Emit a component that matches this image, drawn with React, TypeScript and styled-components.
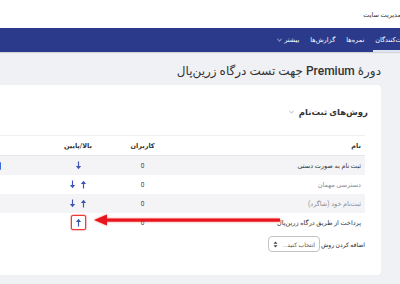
import React from "react";
import styled, { createGlobalStyle } from "styled-components";

const GlobalStyle = createGlobalStyle`
  html, body {
    margin: 0;
    padding: 0;
    background: #f0f1f5;
    overflow: hidden;
  }
  body {
    font-family: Roboto, "DejaVu Sans", sans-serif;
    color: #333;
  }
`;

type Method = { name: string; users: number; up: boolean; down: boolean; muted?: boolean; mark?: boolean; edit?: boolean };

const methods: Method[] = [
  { name: "ثبت نام به صورت دستی", users: 0, up: false, down: true, edit: true },
  { name: "دسترسی مهمان", users: 0, up: true, down: true, muted: true },
  { name: "ثبت‌نام خود (شاگرد)", users: 0, up: true, down: true, muted: true },
  { name: "پرداخت از طریق درگاه زرین‌پال", users: 0, up: true, down: false, mark: true },
];

const Arrow: React.FC<{ dir: "up" | "down" }> = ({ dir }) => (
  <svg width="7" height="9" viewBox="0 0 7 9" style={{ transform: dir === "down" ? "rotate(180deg)" : undefined }}>
    <path d="M3.5 8.5 V2.5" stroke="#3a55b2" strokeWidth="1.15" />
    <path d="M0.9 4.1 L3.5 0.8 L6.1 4.1 Z" fill="#3a55b2" />
  </svg>
);

const App: React.FC = () => {
  return (
    <Page dir="rtl">
      <GlobalStyle />
      <TopBar>
        <SiteLink>مدیریت سایت</SiteLink>
      </TopBar>
      <NavBar>
        <NavList>
          <NavItem $active>شرکت‌کنندگان</NavItem>
          <NavItem>نمره‌ها</NavItem>
          <NavItem>گزارش‌ها</NavItem>
          <NavItem>
            بیشتر
            <svg width="5" height="4" viewBox="0 0 6 4">
              <path d="M0.5 0.8 L3 3.2 L5.5 0.8" stroke="#fff" strokeWidth="0.9" fill="none" />
            </svg>
          </NavItem>
        </NavList>
      </NavBar>
      <Content>
        <Title>دورهٔ Premium جهت تست درگاه زرین‌پال</Title>
        <Card>
          <SectionHead>
            روش‌های ثبت‌نام
            <svg width="5" height="4" viewBox="0 0 6 4">
              <path d="M0.5 0.8 L3 3.2 L5.5 0.8" stroke="#999" strokeWidth="0.9" fill="none" />
            </svg>
          </SectionHead>
          <Table>
            <thead>
              <tr>
                <Th $w={172}>نام</Th>
                <Th $w={77} $center>کاربران</Th>
                <Th $w={36} $center>بالا/پایین</Th>
                <Th />
              </tr>
            </thead>
            <tbody>
              {methods.map((m, i) => (
                <Row key={i} $striped={i % 2 === 0}>
                  <NameCell $muted={m.muted}>{m.name}</NameCell>
                  <Td $center>{m.users}</Td>
                  <Td $center>
                    <Moves>
                      {m.up && (m.mark ? <MarkedBtn><Arrow dir="up" /></MarkedBtn> : <MoveBtn><Arrow dir="up" /></MoveBtn>)}
                      {m.down && <MoveBtn><Arrow dir="down" /></MoveBtn>}
                    </Moves>
                  </Td>
                  <ActionCell>
                    {m.edit && (
                      <svg width="10" height="10" viewBox="0 0 10 10">
                        <rect x="0" y="1" width="9" height="8" rx="1" fill="#3a6fd8" />
                      </svg>
                    )}
                  </ActionCell>
                </Row>
              ))}
            </tbody>
          </Table>
          <AddRow>
            <AddLabel>اضافه کردن روش</AddLabel>
            <Select>
              انتخاب کنید...
              <svg width="5" height="7" viewBox="0 0 5 7">
                <path d="M0.5 2.8 L2.5 0.6 L4.5 2.8 Z M0.5 4.2 L2.5 6.4 L4.5 4.2 Z" fill="#444" />
              </svg>
            </Select>
          </AddRow>
        </Card>
      </Content>
      <Pointer width="186" height="12" viewBox="0 0 186 12">
        <rect x="10" y="4.5" width="176" height="3.2" fill="#e8161c" />
        <path d="M0 6 L13 0.5 L13 11.5 Z" fill="#e8161c" />
      </Pointer>
    </Page>
  );
};

const Page = styled.div`
  position: relative;
  width: 400px;
  height: 284px;
  direction: rtl;
`;

const TopBar = styled.div`
  height: 28px;
  background: #fff;
  display: flex;
  align-items: center;
`;

const SiteLink = styled.span`
  font-size: 6.5px;
  color: #333;
  margin: 1px -1px 0 0;
`;

const NavBar = styled.div`
  height: 24px;
  background: #2b3a8a;
  box-shadow: 0 1px 1px rgba(0, 0, 0, 0.12);
`;

const NavList = styled.div`
  display: flex;
  height: 100%;
  gap: 7px;
  margin-right: -16px;
`;

const NavItem = styled.div<{ $active?: boolean }>`
  display: flex;
  align-items: center;
  gap: 2px;
  height: 100%;
  box-sizing: border-box;
  padding: 2px 2px 0;
  font-size: 6.5px;
  color: #fff;
  border-bottom: 2px solid ${(p) => (p.$active ? "#dfe4f2" : "transparent")};
`;

const Content = styled.div`
  padding: 8px 19px 0 0;
`;

const Title = styled.h1`
  margin: 0;
  font-size: 12px;
  font-weight: 500;
  line-height: 22px;
  color: #333;
`;

const Card = styled.div`
  margin-top: 3px;
  width: 480px;
  background: #fff;
  border-radius: 4px;
  padding: 19px 16px 23px 0;
`;

const SectionHead = styled.h2`
  display: flex;
  align-items: center;
  gap: 5px;
  margin: 0 -3px 15px 0;
  font-size: 8.5px;
  font-weight: 600;
  line-height: 16px;
  color: #333;
`;

const Table = styled.table`
  width: 100%;
  border-collapse: collapse;
  font-size: 6.5px;
  border-top: 1px solid #f0f0f2;
`;

const Th = styled.th<{ $w?: number; $center?: boolean }>`
  width: ${(p) => (p.$w ? `${p.$w}px` : "auto")};
  height: 19px;
  padding: 0 4px;
  text-align: ${(p) => (p.$center ? "center" : "right")};
  font-weight: 600;
  color: #333;
  border-bottom: 1px solid #e6e6ea;
`;

const Row = styled.tr<{ $striped: boolean }>`
  background: ${(p) => (p.$striped ? "#f4f4f6" : "#fff")};
`;

const Td = styled.td<{ $center?: boolean }>`
  height: 19px;
  padding: 0 4px;
  text-align: ${(p) => (p.$center ? "center" : "right")};
  color: #444;
`;

const NameCell = styled(Td)<{ $muted?: boolean }>`
  color: ${(p) => (p.$muted ? "#8a8a8f" : "#333")};
`;

const ActionCell = styled.td`
  padding: 0 54px 0 0;
  text-align: right;
  line-height: 0;
`;

const Moves = styled.div`
  display: inline-flex;
  gap: 4px;
  align-items: center;
  vertical-align: middle;
`;

const MoveBtn = styled.span`
  display: inline-flex;
  align-items: center;
  justify-content: center;
  width: 7px;
  height: 9px;
`;

const MarkedBtn = styled(MoveBtn)`
  width: 15px;
  height: 15px;
  box-sizing: border-box;
  border: 1px solid #f03a3a;
  box-shadow: 0 0 0 0.5px rgba(240, 58, 58, 0.6);
  border-radius: 2px;
  background: #fff;
`;

const AddRow = styled.div`
  display: flex;
  align-items: center;
  margin-top: 4px;
  gap: 1px;
`;

const AddLabel = styled.span`
  font-size: 6px;
  font-weight: 400;
  color: #222;
  white-space: nowrap;
`;

const Select = styled.div`
  display: flex;
  align-items: center;
  justify-content: space-between;
  box-sizing: border-box;
  width: 52px;
  height: 16px;
  padding: 0 4px;
  border: 1px solid #c4c4c8;
  border-radius: 4px;
  font-size: 6px;
  color: #555;
  white-space: nowrap;
`;

const Pointer = styled.svg`
  position: absolute;
  left: 94px;
  top: 214px;
  filter: drop-shadow(0 0 1px rgba(232, 22, 28, 0.5));
`;

export default App;
